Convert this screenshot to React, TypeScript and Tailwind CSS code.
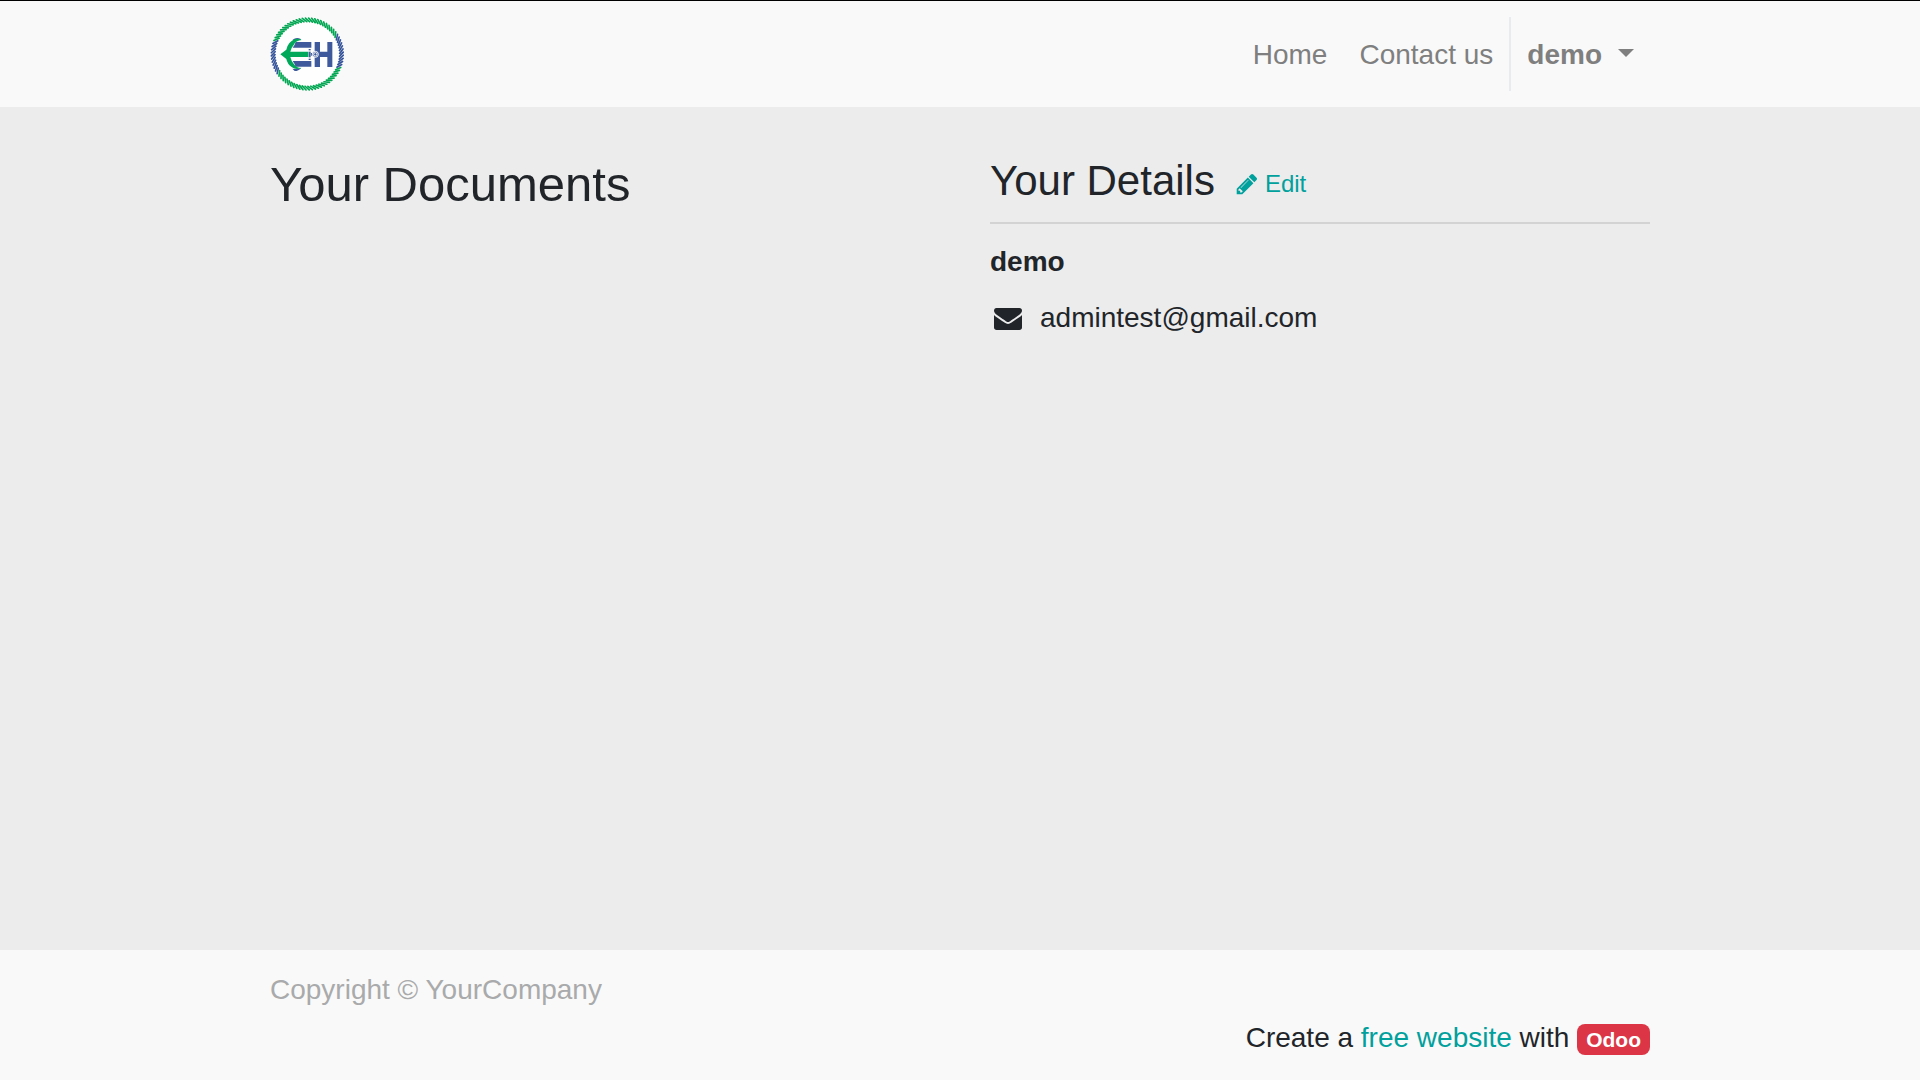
const STRANDS = 72;

function point(radius: number, degrees: number) {
  const a = (degrees * Math.PI) / 180;
  return `${(142 + radius * Math.cos(a)).toFixed(2)} ${(162 + radius * Math.sin(a)).toFixed(2)}`;
}

function isBlue(degrees: number) {
  return degrees < 25 || degrees > 327 || (degrees > 147 && degrees < 203);
}

function ropePath(blue: boolean) {
  let d = "";
  for (let i = 0; i < STRANDS; i++) {
    const deg = (i * 360) / STRANDS;
    if (isBlue(deg) === blue) {
      d += `M${point(97, deg + 4)}L${point(108, deg - 3)}`;
    }
  }
  return d;
}

function Logo() {
  return (
    <svg viewBox="30 51 222 222" className="size-[74px]" role="img" aria-label="Company logo">
      <circle cx="142" cy="162" r="104" fill="#fdfefd" />
      <g fill="none" strokeWidth="5" strokeLinecap="round">
        <path d={ropePath(false)} stroke="#00a651" />
        <path d={ropePath(true)} stroke="#34539a" />
      </g>
      <g fill="#3e5a9c">
        <path d="M107 126H154V143H98Q104 136 107 126Z" />
        <path d="M98 183H154V200H107Q104 191 98 183Z" />
        <path d="M164 126H180V155H202V126H217V201H202V171H180V201H164Z" />
        <path d="M98 119Q108 111 121 116L123 120Q111 119 100 125Z" />
        <path d="M97 206Q110 209 124 203Q116 213 104 213Z" />
        <rect x="146" y="147" width="6" height="4" />
        <rect x="146" y="176" width="6" height="4" />
        <rect x="146" y="155" width="6" height="17" />
        <rect x="153" y="159" width="25" height="8" />
      </g>
      <path
        d="M61 163L79 149Q84 126 104 118Q114 114 125 120Q107 122 101 135Q93 144 91 155H145V171H91Q94 184 102 193Q109 204 124 204Q107 211 95 201Q82 192 79 177Z"
        fill="#00a859"
      />
      <circle cx="166" cy="163" r="9" fill="#3e5a9c" stroke="#f9f9f9" strokeWidth="3" />
      <circle cx="166" cy="163" r="5" fill="#3e5a9c" stroke="#f9f9f9" strokeWidth="3" />
    </svg>
  );
}

function PencilIcon() {
  return (
    <svg viewBox="0 0 1792 1792" className="size-6" fill="currentColor" aria-hidden="true">
      <path d="M491 1536l91-91-235-235-91 91v107h128v128h107zm523-928q0-22-22-22-10 0-17 7l-542 542q-7 7-7 17 0 22 22 22 10 0 17-7l542-542q7-7 7-17zm-54-192l416 416-832 832h-416v-416zm683 96q0 53-37 90l-166 166-416-416 166-165q36-38 90-38 53 0 91 38l235 234q37 39 37 91z" />
    </svg>
  );
}

function EnvelopeIcon() {
  return (
    <svg viewBox="0 0 1792 1792" className="size-7" fill="currentColor" aria-hidden="true">
      <path d="M1792 710v794q0 66-47 113t-113 47h-1472q-66 0-113-47t-47-113v-794q44 49 101 87 362 246 497 345 57 42 92.5 65.5t94.5 48 110 24.5h2q51 0 110-24.5t94.5-48 92.5-65.5q170-123 498-345 57-39 100-87zm0-294q0 79-49 151t-122 123q-376 261-468 325-10 7-42.5 31t-54 38.5-52 32.5-57.5 27-50 9h-2q-23 0-50-9t-57.5-27-52-32.5-54-38.5-42.5-31q-91-64-262-182.5t-205-142.5q-62-42-117-115.5t-55-136.5q0-78 41.5-130t118.5-52h1472q65 0 112.5 47t47.5 113z" />
    </svg>
  );
}

export default function App() {
  return (
    <div className="flex min-h-screen flex-col bg-[#ececec] font-['Liberation_Sans',Arial,sans-serif] text-[28px] leading-[44px] text-[#212529]">
      <header className="border-t border-black bg-[#f9f9f9] py-4">
        <div className="mx-auto flex max-w-[1440px] items-stretch justify-between px-[30px]">
          <a href="#">
            <Logo />
          </a>
          <nav className="flex items-stretch text-[#7f7f7f]">
            <a href="#" className="flex items-center px-4 pt-0.5">
              Home
            </a>
            <a href="#" className="flex items-center px-4 pt-0.5">
              Contact us
            </a>
            <button
              type="button"
              className="flex items-center gap-4 border-l-2 border-[#e9ecef] px-4 pt-0.5 font-bold"
            >
              demo
              <svg viewBox="0 0 16 8" className="mb-1 h-2 w-4" fill="currentColor" aria-hidden="true">
                <path d="M0 0H16L8 8Z" />
              </svg>
            </button>
          </nav>
        </div>
      </header>

      <main className="flex-1">
        <div className="mx-auto grid max-w-[1440px] grid-cols-2 gap-[60px] px-[30px] pt-12">
          <section>
            <h3 className="text-[49px] leading-[59px]">Your Documents</h3>
          </section>
          <section>
            <div className="flex items-center gap-5 border-b-2 border-[#d3d3d3] pb-[15px]">
              <h4 className="text-[42px] leading-[52px]">Your Details</h4>
              <a href="#" className="flex items-center gap-1.5 pt-1.5 text-2xl text-[#00a09d]">
                <PencilIcon />
                Edit
              </a>
            </div>
            <address className="mt-4 not-italic">
              <strong className="block">demo</strong>
              <div className="mt-3 flex items-center gap-[18px] pl-1">
                <EnvelopeIcon />
                <span>admintest@gmail.com</span>
              </div>
            </address>
          </section>
        </div>
      </main>

      <footer className="bg-[#f9f9f9]">
        <div className="mx-auto max-w-[1440px] px-[30px] pt-[18px] pb-5">
          <p className="text-[#a9aaab]">Copyright © YourCompany</p>
          <p className="mt-1 text-right">
            Create a{" "}
            <a href="#" className="text-[#00a09d]">
              free website
            </a>{" "}
            with{" "}
            <a
              href="#"
              className="inline-block rounded-lg bg-[#dc3545] px-[9px] py-[5px] align-baseline text-[21px] leading-[21px] font-bold text-white"
            >
              Odoo
            </a>
          </p>
        </div>
      </footer>
    </div>
  );
}
